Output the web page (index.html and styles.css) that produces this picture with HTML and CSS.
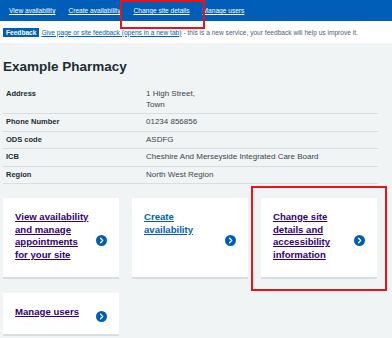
FILE: index.html
```html
<!DOCTYPE html>
<html lang="en">
<head>
    <meta charset="UTF-8">
    <meta name="viewport" content="width=device-width, initial-scale=1.0">
    <title>Example Pharmacy</title>
    <link rel="stylesheet" href="styles.css">
</head>
<body>
    <header class="site-header">
        <nav class="site-nav">
            <a href="#" class="nav-link">View availability</a>
            <a href="#" class="nav-link">Create availability</a>
            <a href="#" class="nav-link">Change site details</a>
            <a href="#" class="nav-link">Manage users</a>
        </nav>
    </header>

    <div class="feedback-bar">
        <span class="feedback-tag">Feedback</span>
        <a href="#" class="feedback-link">Give page or site feedback (opens in a new tab)</a>
        <span class="feedback-text">- this is a new service, your feedback will help us improve it.</span>
    </div>

    <main class="page">
        <h1 class="page-title">Example Pharmacy</h1>

        <dl class="summary">
            <div class="summary-row">
                <dt>Address</dt>
                <dd>1 High Street,<br>Town</dd>
            </div>
            <div class="summary-row">
                <dt>Phone Number</dt>
                <dd>01234 856856</dd>
            </div>
            <div class="summary-row">
                <dt>ODS code</dt>
                <dd>ASDFG</dd>
            </div>
            <div class="summary-row">
                <dt>ICB</dt>
                <dd>Cheshire And Merseyside Integrated Care Board</dd>
            </div>
            <div class="summary-row">
                <dt>Region</dt>
                <dd>North West Region</dd>
            </div>
        </dl>

        <div class="card-grid">
            <div class="card">
                <a href="#" class="card-link visited">View availability and manage appointments for your site</a>
                <span class="chevron"><svg viewBox="0 0 12 12" width="11" height="11"><circle cx="6" cy="6" r="6" fill="#005eb8"/><path d="M5 3.6 L7.3 6 L5 8.4" fill="none" stroke="#fff" stroke-width="1.4" stroke-linecap="round" stroke-linejoin="round"/></svg></span>
            </div>
            <div class="card">
                <a href="#" class="card-link">Create availability</a>
                <span class="chevron"><svg viewBox="0 0 12 12" width="11" height="11"><circle cx="6" cy="6" r="6" fill="#005eb8"/><path d="M5 3.6 L7.3 6 L5 8.4" fill="none" stroke="#fff" stroke-width="1.4" stroke-linecap="round" stroke-linejoin="round"/></svg></span>
            </div>
            <div class="card highlighted">
                <a href="#" class="card-link visited">Change site details and accessibility information</a>
                <span class="chevron"><svg viewBox="0 0 12 12" width="11" height="11"><circle cx="6" cy="6" r="6" fill="#005eb8"/><path d="M5 3.6 L7.3 6 L5 8.4" fill="none" stroke="#fff" stroke-width="1.4" stroke-linecap="round" stroke-linejoin="round"/></svg></span>
            </div>
            <div class="card">
                <a href="#" class="card-link visited">Manage users</a>
                <span class="chevron"><svg viewBox="0 0 12 12" width="11" height="11"><circle cx="6" cy="6" r="6" fill="#005eb8"/><path d="M5 3.6 L7.3 6 L5 8.4" fill="none" stroke="#fff" stroke-width="1.4" stroke-linecap="round" stroke-linejoin="round"/></svg></span>
            </div>
        </div>
    </main>

    <!-- annotation box over the nav item -->
    <div class="annotation nav-annotation"></div>
</body>
</html>
```

FILE: styles.css
```css
:root {
    --nhs-blue: #005eb8;
    --nhs-purple: #330072;
    --text-color: #212b32;
    --secondary-text: #4c6272;
    --grey-bg: #f0f4f5;
    --border-color: #d8dde0;
    --annotation-red: #e8141c;
}

* {
    box-sizing: border-box;
}

body {
    margin: 0;
    font-family: "Liberation Sans", Arial, sans-serif;
    color: var(--text-color);
    background: var(--grey-bg);
    position: relative;
    overflow: hidden;
}

.site-header {
    background: var(--nhs-blue);
    height: 21px;
}

.site-nav {
    display: flex;
    align-items: center;
    gap: 13px;
    height: 100%;
    padding-left: 9px;
}

.nav-link {
    color: white;
    font-size: 6.6px;
    text-decoration: underline;
}

.feedback-bar {
    background: white;
    height: 22px;
    display: flex;
    align-items: center;
    padding-left: 3px;
    font-size: 6.6px;
    white-space: nowrap;
}

.feedback-tag {
    background: var(--nhs-blue);
    color: white;
    font-weight: 700;
    padding: 1px 3px;
    margin-right: 2px;
}

.feedback-link {
    color: var(--nhs-blue);
    margin-right: 2px;
}

.feedback-text {
    color: var(--secondary-text);
}

.page {
    padding: 0 14px 0 3px;
}

.page-title {
    font-size: 13.5px;
    font-weight: 700;
    margin: 14px 0 9px;
    line-height: 20px;
}

.summary {
    margin: 0 0 14px;
    font-size: 8px;
    line-height: 10.5px;
}

.summary-row {
    display: grid;
    grid-template-columns: 140px 1fr;
    padding: 3px 0 3px 3px;
    border-bottom: 1px solid var(--border-color);
}

.summary-row dt {
    font-weight: 700;
    font-size: 7.5px;
}

.summary-row dd {
    margin: 0;
    color: #3a444c;
}

.card-grid {
    display: grid;
    grid-template-columns: repeat(3, 116px);
    column-gap: 13px;
    row-gap: 14px;
}

.card {
    background: white;
    border-bottom: 2px solid var(--border-color);
    display: flex;
    align-items: center;
    gap: 6px;
    padding: 13px 12px 7px 12px;
    position: relative;
}

.card-link {
    flex: 1;
    align-self: flex-start;
    font-size: 9.6px;
    font-weight: 700;
    line-height: 12.7px;
    color: var(--nhs-blue);
    margin-bottom: 8px;
}

.card-link.visited {
    color: var(--nhs-purple);
}

.chevron {
    display: flex;
    flex-shrink: 0;
}

.card.highlighted::after {
    content: "";
    position: absolute;
    top: -12px;
    left: -10px;
    right: -10px;
    bottom: -14px;
    border: 2px solid var(--annotation-red);
}

.annotation {
    position: absolute;
    border: 2px solid var(--annotation-red);
}

.nav-annotation {
    top: 0;
    left: 120px;
    width: 85px;
    height: 29px;
}
```
